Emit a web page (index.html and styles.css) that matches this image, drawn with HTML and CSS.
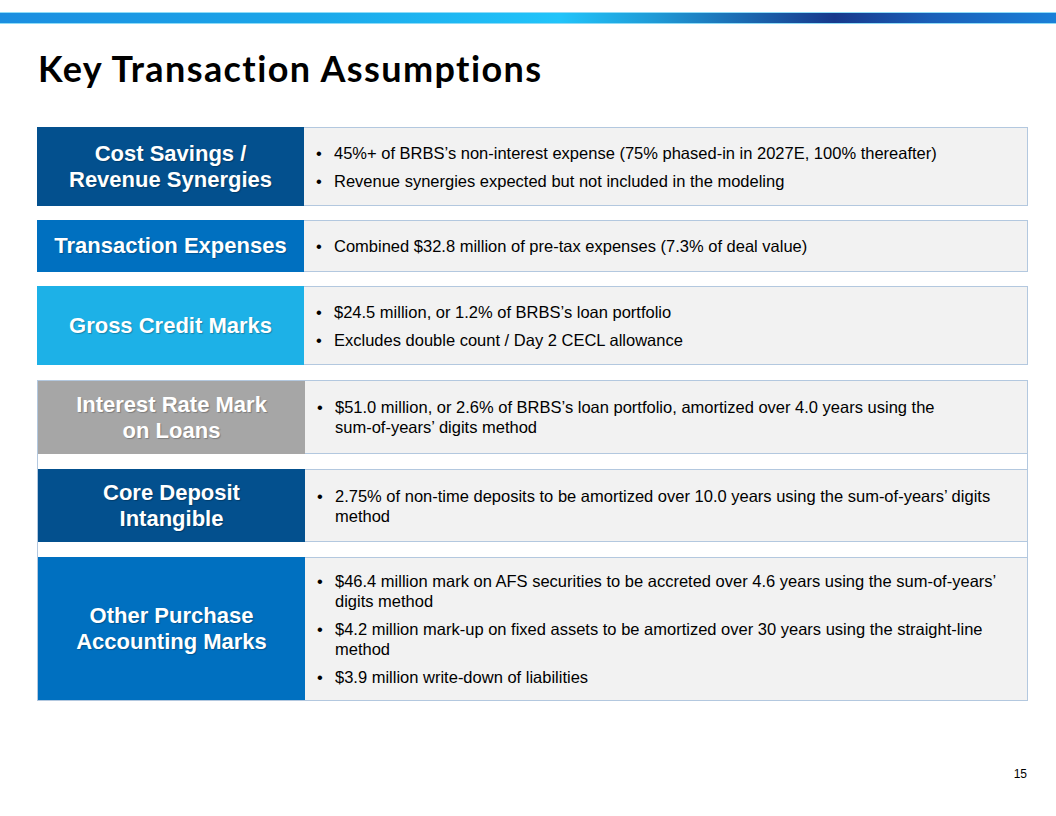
FILE: index.html
```html
<!DOCTYPE html>
<html>
<head>
<meta charset="utf-8">
<link rel="stylesheet" href="styles.css">
</head>
<body>
<div class="page">
  <div class="topbar"></div>
  <h1 class="title">Key Transaction Assumptions</h1>
  <div class="table">
    <div class="row h79">
      <div class="label navy">Cost Savings /<br>Revenue Synergies</div>
      <div class="body">
        <ul>
          <li>45%+ of BRBS’s non-interest expense (75% phased-in in 2027E, 100% thereafter)</li>
          <li>Revenue synergies expected but not included in the modeling</li>
        </ul>
      </div>
    </div>
    <div class="row h52">
      <div class="label blue">Transaction Expenses</div>
      <div class="body">
        <ul>
          <li>Combined $32.8 million of pre-tax expenses (7.3% of deal value)</li>
        </ul>
      </div>
    </div>
    <div class="row h79">
      <div class="label sky">Gross Credit Marks</div>
      <div class="body">
        <ul>
          <li>$24.5 million, or 1.2% of BRBS’s loan portfolio</li>
          <li>Excludes double count / Day 2 CECL allowance</li>
        </ul>
      </div>
    </div>
    <div class="group">
      <div class="row g73">
        <div class="label grey">Interest Rate Mark<br>on Loans</div>
        <div class="body">
          <ul>
            <li>$51.0 million, or 2.6% of BRBS’s loan portfolio, amortized over 4.0 years using the sum-&#8288;of-&#8288;years’ digits method</li>
          </ul>
        </div>
      </div>
      <div class="row g73">
        <div class="label navy">Core Deposit<br>Intangible</div>
        <div class="body">
          <ul>
            <li>2.75% of non-time deposits to be amortized over 10.0 years using the sum-&#8288;of-&#8288;years’ digits method</li>
          </ul>
        </div>
      </div>
      <div class="row g143">
        <div class="label blue">Other Purchase<br>Accounting Marks</div>
        <div class="body">
          <ul>
            <li>$46.4 million mark on AFS securities to be accreted over 4.6 years using the sum-&#8288;of-&#8288;years’ digits method</li>
            <li>$4.2 million mark-up on fixed assets to be amortized over 30 years using the straight-&#8288;line method</li>
            <li>$3.9 million write-down of liabilities</li>
          </ul>
        </div>
      </div>
    </div>
  </div>
  <div class="pagenum">15</div>
</div>
</body>
</html>
```

FILE: styles.css
```css
html, body {
  margin: 0;
  padding: 0;
  background: #ffffff;
}
.page {
  width: 1056px;
  height: 816px;
  position: relative;
  overflow: hidden;
  font-family: "Liberation Sans", Arial, sans-serif;
  color: #000;
}
.topbar {
  margin-top: 12px;
  height: 10px;
  border-top: 1px solid #8fdcf7;
  border-bottom: 1px solid #8fdcf7;
  background: linear-gradient(to right,
    #1b8ee0 0%,
    #1ba8ea 30%,
    #21c4fa 53%,
    #1f9ad6 62%,
    #17398c 79%,
    #1a5fb8 88%,
    #1a80d8 100%);
}
.title {
  margin: 0;
  padding: 22px 0 0 38px;
  height: 44px;
  font-family: Lato, "Open Sans", sans-serif;
  font-weight: 700;
  font-size: 36px;
  line-height: 44px;
  letter-spacing: 1.4px;
  color: #000;
}
.table {
  margin: 37px 0 0 37px;
  width: 991px;
  display: flex;
  flex-direction: column;
  gap: 14px;
}
.row {
  display: flex;
}
.h79 { height: 79px; }
.h52 { height: 52px; }
.g73 { height: 73px; }
.g143 { height: 143px; }
.label {
  width: 267px;
  flex-shrink: 0;
  display: flex;
  align-items: center;
  justify-content: center;
  text-align: center;
  color: #ffffff;
  font-weight: 700;
  font-size: 22px;
  line-height: 26px;
  text-shadow: 1px 1px 1px rgba(0, 0, 0, 0.25);
}
.navy { background: #03508e; }
.blue { background: #0070c0; }
.sky { background: #1db1e7; }
.grey { background: #a6a6a6; }
.body {
  flex: 1;
  background: #f2f2f2;
  border: 1px solid #b3c8df;
  border-left: 0;
  display: flex;
  align-items: center;
  padding: 0 20px 0 10px;
}
ul {
  margin: 0;
  padding: 0;
  list-style: none;
  display: flex;
  flex-direction: column;
  gap: 8px;
}
li {
  font-size: 16.5px;
  line-height: 20px;
  padding-left: 20px;
  text-indent: -20px;
}
li::before {
  content: "•";
  display: inline-block;
  width: 20px;
  text-indent: 0;
  padding-left: 2px;
  box-sizing: border-box;
}
.group {
  border: 1px solid #b3c8df;
  display: flex;
  flex-direction: column;
  gap: 15px;
  margin-top: 1px;
}
.group .row .body {
  border-right: 0;
}
.group .row:first-child .body {
  border-top: 0;
}
.group .row:last-child .body {
  border-bottom: 0;
}
.pagenum {
  position: absolute;
  right: 29px;
  top: 766px;
  font-size: 12px;
  line-height: 16px;
  color: #000;
}
```
